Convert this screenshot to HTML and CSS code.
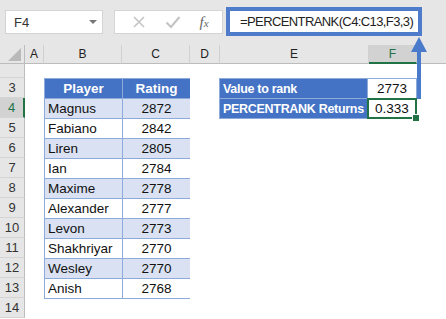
FILE: index.html
```html
<!DOCTYPE html>
<html lang="en">
<head>
  <meta charset="UTF-8" />
  <title>PERCENTRANK</title>
  <link rel="stylesheet" href="styles.css">
</head>
<body>
  <div class="app">

    <div class="toolbar">
      <div class="namebox">
        <span>F4</span>
        <span class="caret"></span>
      </div>
      <div class="fx-buttons">
        <svg class="btn" width="14" height="14" viewBox="0 0 14 14">
          <path d="M2 2 L12 12 M12 2 L2 12" stroke="#c4c4c4" stroke-width="1.6" fill="none" />
        </svg>
        <svg class="btn" width="16" height="14" viewBox="0 0 16 14">
          <path d="M1.5 7.5 L6 12 L14.5 2" stroke="#c4c4c4" stroke-width="2.2" fill="none" />
        </svg>
        <span class="fx">f<span class="x">x</span></span>
      </div>
      <div class="formula">=PERCENTRANK(C4:C13,F3,3)</div>
    </div>

    <div class="sheet">
      <div class="corner"><span class="tri"></span></div>
      <div class="col-head">A</div>
      <div class="col-head">B</div>
      <div class="col-head">C</div>
      <div class="col-head">D</div>
      <div class="col-head">E</div>
      <div class="col-head active">F</div>
      <div class="col-head last"></div>

      <div class="row-head"></div>
      <div class="row-head">3</div>
      <div class="row-head active">4</div>
      <div class="row-head">5</div>
      <div class="row-head">6</div>
      <div class="row-head">7</div>
      <div class="row-head">8</div>
      <div class="row-head">9</div>
      <div class="row-head">10</div>
      <div class="row-head">11</div>
      <div class="row-head">12</div>
      <div class="row-head">13</div>
      <div class="row-head">14</div>

      <div class="players">
        <div class="th">Player</div><div class="th center">Rating</div>
        <div class="td band">Magnus</div><div class="td band center">2872</div>
        <div class="td">Fabiano</div><div class="td center">2842</div>
        <div class="td band">Liren</div><div class="td band center">2805</div>
        <div class="td">Ian</div><div class="td center">2784</div>
        <div class="td band">Maxime</div><div class="td band center">2778</div>
        <div class="td">Alexander</div><div class="td center">2777</div>
        <div class="td band">Levon</div><div class="td band center">2773</div>
        <div class="td">Shakhriyar</div><div class="td center">2770</div>
        <div class="td band">Wesley</div><div class="td band center">2770</div>
        <div class="td">Anish</div><div class="td center">2768</div>
      </div>

      <div class="rank">
        <div class="th">Value to rank</div><div class="td center">2773</div>
        <div class="th">PERCENTRANK Returns</div><div class="td center selected">0.333</div>
      </div>
    </div>

    <svg class="arrow" width="20" height="66" viewBox="0 0 20 66">
      <path d="M10 14 L10 63" stroke="#4a7bcb" stroke-width="4" />
      <path d="M10 1 L2 16 L18 16 Z" fill="#4a7bcb" />
    </svg>
  </div>
</body>
</html>
```

FILE: styles.css
```css
* {
  box-sizing: border-box;
}

body {
  margin: 0;
  font-family: "Liberation Sans", Arial, sans-serif;
  background-color: #fff;
}

.app {
  position: relative;
  width: 446px;
  height: 319px;
  overflow: hidden;
}

/* formula bar */
.toolbar {
  display: flex;
  align-items: flex-start;
  height: 45px;
  padding-left: 5px;
  background-color: #e6e6e6;
}

.namebox {
  display: flex;
  align-items: center;
  justify-content: space-between;
  width: 98px;
  height: 24px;
  margin-top: 10px;
  padding: 0 5px 0 8px;
  background-color: #fff;
  border: 1px solid #d4d4d4;
  font-size: 13px;
  color: #333;
}

.caret {
  width: 0;
  height: 0;
  border-left: 4px solid transparent;
  border-right: 4px solid transparent;
  border-top: 4px solid #777;
}

.fx-buttons {
  display: flex;
  align-items: center;
  justify-content: space-around;
  width: 109px;
  height: 24px;
  margin-top: 10px;
  margin-left: 11px;
  padding: 0 4px 0 8px;
  background-color: #fff;
  border: 1px solid #d4d4d4;
}

.fx {
  font-family: "Liberation Serif", serif;
  font-style: italic;
  font-size: 15px;
  color: #666;
}

.fx .x {
  font-size: 11px;
}

.formula {
  width: 196px;
  height: 29px;
  margin-top: 7px;
  margin-left: 3px;
  padding: 3px 0 0 10px;
  overflow: hidden;
  background-color: #fff;
  border: 4px solid #4e7ccb;
  font-size: 13px;
  letter-spacing: -0.6px;
  color: #222;
  white-space: nowrap;
}

/* grid */
.sheet {
  display: grid;
  grid-template-columns: 25px 19px 78px 68px 30px 149px 48px 1fr;
  grid-template-rows: 19px 14px repeat(12, 20px);
}

.corner,
.col-head,
.row-head {
  background-color: #e6e6e6;
  color: #333;
}

.corner {
  position: relative;
  border-right: 1px solid #bcbcbc;
  border-bottom: 1px solid #bcbcbc;
}

.corner .tri {
  position: absolute;
  right: 3px;
  bottom: 2px;
  width: 0;
  height: 0;
  border-left: 13px solid transparent;
  border-bottom: 13px solid #b9b9b9;
}

.col-head {
  display: flex;
  align-items: center;
  justify-content: center;
  border-right: 1px solid #d0d0d0;
  border-bottom: 1px solid #bcbcbc;
  font-size: 12px;
  color: #222;
}

.col-head.last {
  border-right: none;
}

.col-head.active {
  background-color: #d2d2d2;
  color: #217346;
  border-bottom: 2px solid #217346;
}

.row-head {
  grid-column: 1;
  display: flex;
  align-items: center;
  justify-content: center;
  border-right: 1px solid #bcbcbc;
  border-bottom: 1px solid #d4d4d4;
  font-size: 13px;
}

.row-head.active {
  background-color: #d2d2d2;
  color: #217346;
  border-right: 2px solid #217346;
}

/* tables */
.players,
.rank {
  display: grid;
  gap: 1px;
  background-color: #8eaadb;
  border: 1px solid #8eaadb;
  align-self: start;
  font-size: 13.5px;
}

.players {
  grid-column: 3 / 5;
  grid-row: 3 / 14;
  grid-template-columns: 77px 67px;
  grid-auto-rows: 19px;
}

.rank {
  grid-column: 6 / 8;
  grid-row: 3 / 5;
  grid-template-columns: 147px 48px;
  grid-auto-rows: 19px;
  margin-left: -1px;
}

.th,
.td {
  display: flex;
  align-items: center;
  padding: 0 3px;
  white-space: nowrap;
  color: #111;
  background-color: #fff;
}

.th {
  background-color: #4472c4;
  color: #fff;
  font-weight: bold;
}

.rank .th {
  font-size: 12.5px;
  letter-spacing: -0.3px;
}

.players .th {
  justify-content: center;
}

.band {
  background-color: #d9e1f2;
}

.center {
  justify-content: center;
}

.selected {
  position: relative;
  outline: 2px solid #217346;
  outline-offset: -1px;
}

.selected::after {
  content: "";
  position: absolute;
  right: -4px;
  bottom: -4px;
  width: 6px;
  height: 6px;
  background-color: #217346;
  border: 1px solid #fff;
}

/* annotation arrow */
.arrow {
  position: absolute;
  left: 409px;
  top: 36px;
}
```
